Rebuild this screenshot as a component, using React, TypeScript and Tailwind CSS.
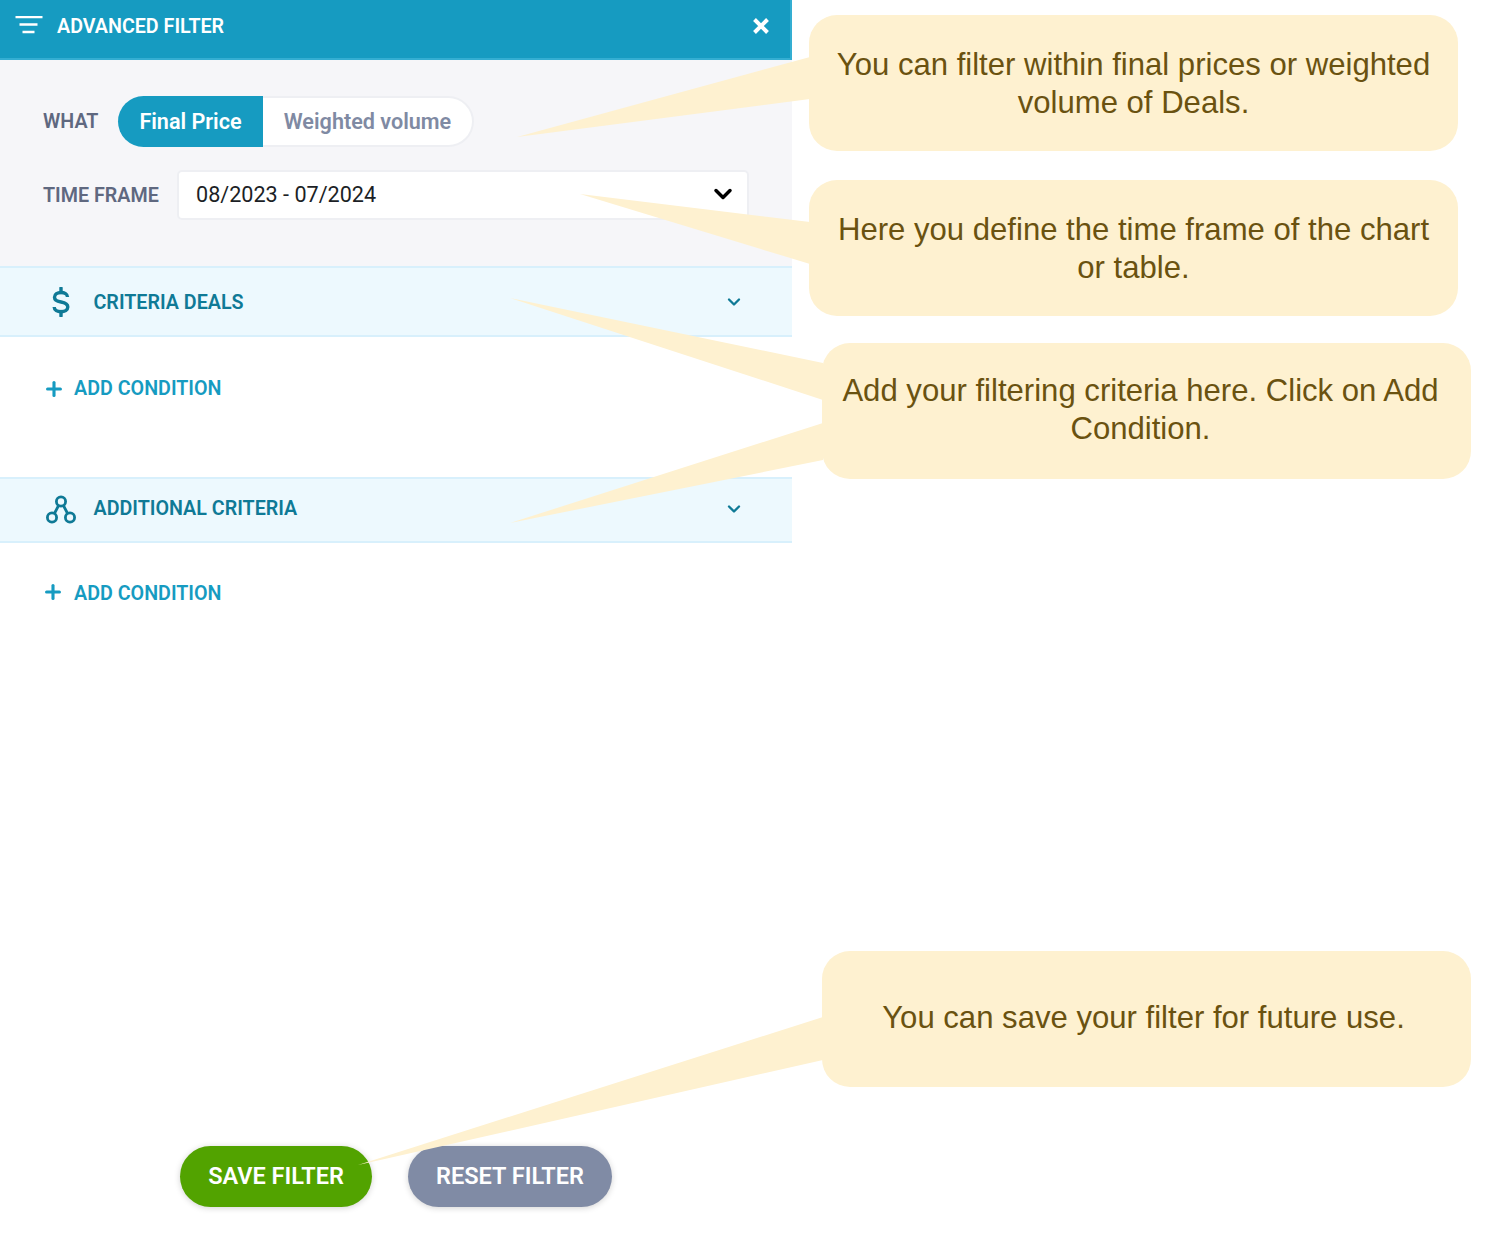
import type { ReactNode } from "react";
import { ChevronDown, Plus } from "lucide-react";

const CALLOUTS = [
  { pos: "left-[809px] top-[15px] pt-[2px]", lines: ["You can filter within final prices or weighted", "volume of Deals."] },
  { pos: "left-[809px] top-[180px] pt-[2px]", lines: ["Here you define the time frame of the chart", "or table."] },
  { pos: "left-[822px] top-[343px] pr-[12px] pb-[2px]", lines: ["Add your filtering criteria here. Click on Add", "Condition."] },
  { pos: "left-[822px] top-[951px] pr-[6px] pb-[3px]", lines: ["You can save your filter for future use."] },
];

const TAILS = [
  "517,137 810,57 810,99",
  "580,194 810,222 810,264",
  "510,298 823,363 823,400",
  "510,523 823,423 823,460",
  "358,1165 823,1017 823,1060",
];

function FilterIcon() {
  return (
    <svg width="28" height="20" viewBox="0 0 28 20" fill="none" stroke="#fff" strokeWidth="2.6">
      <path d="M0.5 1h27M4.5 8.5h18M7.5 16h12" />
    </svg>
  );
}

function CloseIcon() {
  return (
    <svg width="18" height="18" viewBox="0 0 18 18" fill="none" stroke="#fff" strokeWidth="4">
      <path d="M2.5 2.5l13 13M15.5 2.5l-13 13" />
    </svg>
  );
}

function DollarIcon() {
  return (
    <svg width="20" height="30" viewBox="0 0 20 30" fill="none" stroke="#0f7a96" strokeWidth="3.4">
      <path d="M16.5 10C16.5 7 13.5 5.5 10 5.5S3.5 7.2 3.5 10.2 6 14.3 10 15s6.8 2 6.8 5-3.2 4.7-6.8 4.7-6.8-1.7-6.8-4.7" />
      <path d="M10 1v4.5M10 24.5V29" strokeLinecap="round" />
    </svg>
  );
}

function NodesIcon() {
  return (
    <svg width="32" height="30" viewBox="0 0 32 30" fill="none" stroke="#0f7a96" strokeWidth="2.8">
      <circle cx="16" cy="7.5" r="4.6" />
      <circle cx="7" cy="23.5" r="4.6" />
      <circle cx="25" cy="23.5" r="4.6" />
      <path d="M13.6 11.5L9.4 19.5M18.4 11.5l4.2 8" />
    </svg>
  );
}

function AccordionHeader({ icon, label, labelOffset }: { icon: ReactNode; label: string; labelOffset: string }) {
  return (
    <div className="flex items-center border-y-2 border-[#d8f0fc] bg-[#edf9fe] pl-[44px] pr-[48px]">
      <span className="grid w-[34px] place-items-center">{icon}</span>
      <span className={`ml-[15.5px] flex-1 text-[19.7px] font-semibold text-[#0f7a96] ${labelOffset}`}>{label}</span>
      <ChevronDown className="h-[20px] w-[20px] text-[#0f7a96]" strokeWidth={2.8} />
    </div>
  );
}

function AddCondition({ iconClass }: { iconClass: string }) {
  return (
    <div className="flex items-center pl-[43px] text-[19.7px] font-semibold text-[#169bc1]">
      <Plus className={`h-[22px] w-[22px] ${iconClass}`} strokeWidth={3.4} />
      <span className="ml-[9px]">ADD CONDITION</span>
    </div>
  );
}

export default function App() {
  return (
    <div className="relative h-[1236px] w-[1510px] overflow-hidden bg-white font-['Roboto',sans-serif]">
      <div className="flex h-full w-[792px] flex-col">
        {/* header */}
        <div className="flex h-[60px] items-start justify-between border-b-2 border-r-2 border-[#34aed2] bg-[#169bc1] pl-[15px] pr-[20px] pt-[15px]">
          <div className="flex items-center">
            <FilterIcon />
            <span className="ml-[14px] mt-[2px] text-[19.7px] leading-[20px] font-semibold text-white">ADVANCED FILTER</span>
          </div>
          <span className="mt-[2px]"><CloseIcon /></span>
        </div>

        {/* what + time frame */}
        <div className="flex h-[206px] flex-col gap-[23px] bg-[#f6f6f9] pl-[43px] pr-[43px] pt-[36px]">
          <div className="flex items-center">
            <span className="w-[75px] pt-[1px] text-[19.7px] font-semibold text-[#5f6880]">WHAT</span>
            <div className="flex h-[51px] w-[356px] text-[21.6px] font-semibold">
              <span className="flex w-[145px] items-center justify-center rounded-l-full bg-[#169bc1] pt-[1px] text-white">Final Price</span>
              <span className="flex flex-1 items-center justify-center rounded-r-full border-y-2 border-r-2 border-[#eeeff3] bg-white pt-[1px] text-[#7f8aa3]">Weighted volume</span>
            </div>
          </div>
          <div className="flex items-center">
            <span className="w-[134px] pt-[1px] text-[19.7px] font-semibold text-[#5f6880]">TIME FRAME</span>
            <div className="flex h-[50px] flex-1 items-center justify-between rounded-[5px] border-2 border-[#eeeff3] bg-white pl-[17px] pr-[10px] text-[21.6px] text-[#1c1f26]">
              <span>08/2023 - 07/2024</span>
              <ChevronDown className="mb-[2px] h-[28px] w-[28px] text-black" strokeWidth={3} />
            </div>
          </div>
        </div>

        {/* criteria deals */}
        <div className="grid h-[71px] grid-rows-1 [&>div]:h-full">
          <AccordionHeader icon={<DollarIcon />} label="CRITERIA DEALS" labelOffset="pt-[3px]" />
        </div>
        <div className="flex h-[140px] flex-col justify-start pt-[37px]">
          <AddCondition iconClass="" />
        </div>

        {/* additional criteria */}
        <div className="grid h-[66px] grid-rows-1 [&>div]:h-full [&>div]:pb-[3px]">
          <AccordionHeader icon={<NodesIcon />} label="ADDITIONAL CRITERIA" labelOffset="" />
        </div>
        <div className="pt-[36px]">
          <AddCondition iconClass="-ml-[1px] mr-[1px] mb-[3px]" />
        </div>

        {/* footer */}
        <div className="mt-auto flex gap-[36px] pb-[29px] pl-[180px]">
          <button className="flex h-[61px] w-[192px] items-center justify-center rounded-full bg-[#52a300] text-[23.5px] font-semibold text-white shadow-[0_1px_6px_rgba(0,0,0,0.18)]">
            SAVE FILTER
          </button>
          <button className="flex h-[61px] w-[204px] items-center justify-center rounded-full bg-[#808ba5] text-[23.5px] font-semibold text-white shadow-[0_1px_6px_rgba(0,0,0,0.18)]">
            RESET FILTER
          </button>
        </div>
      </div>

      {/* callout tails */}
      <svg className="pointer-events-none absolute left-0 top-0" width="1510" height="1236">
        {TAILS.map((points) => (
          <polygon key={points} points={points} fill="#fef1d0" />
        ))}
      </svg>

      {/* callouts */}
      {CALLOUTS.map(({ pos, lines }) => (
        <div
          key={lines[0]}
          className={`absolute flex h-[136px] w-[649px] flex-col items-center justify-center rounded-[28px] bg-[#fef1d0] font-['Liberation_Sans',sans-serif] text-[31.1px] leading-[38px] text-[#6a5210] ${pos}`}
        >
          {lines.map((line) => (
            <span key={line}>{line}</span>
          ))}
        </div>
      ))}
    </div>
  );
}
